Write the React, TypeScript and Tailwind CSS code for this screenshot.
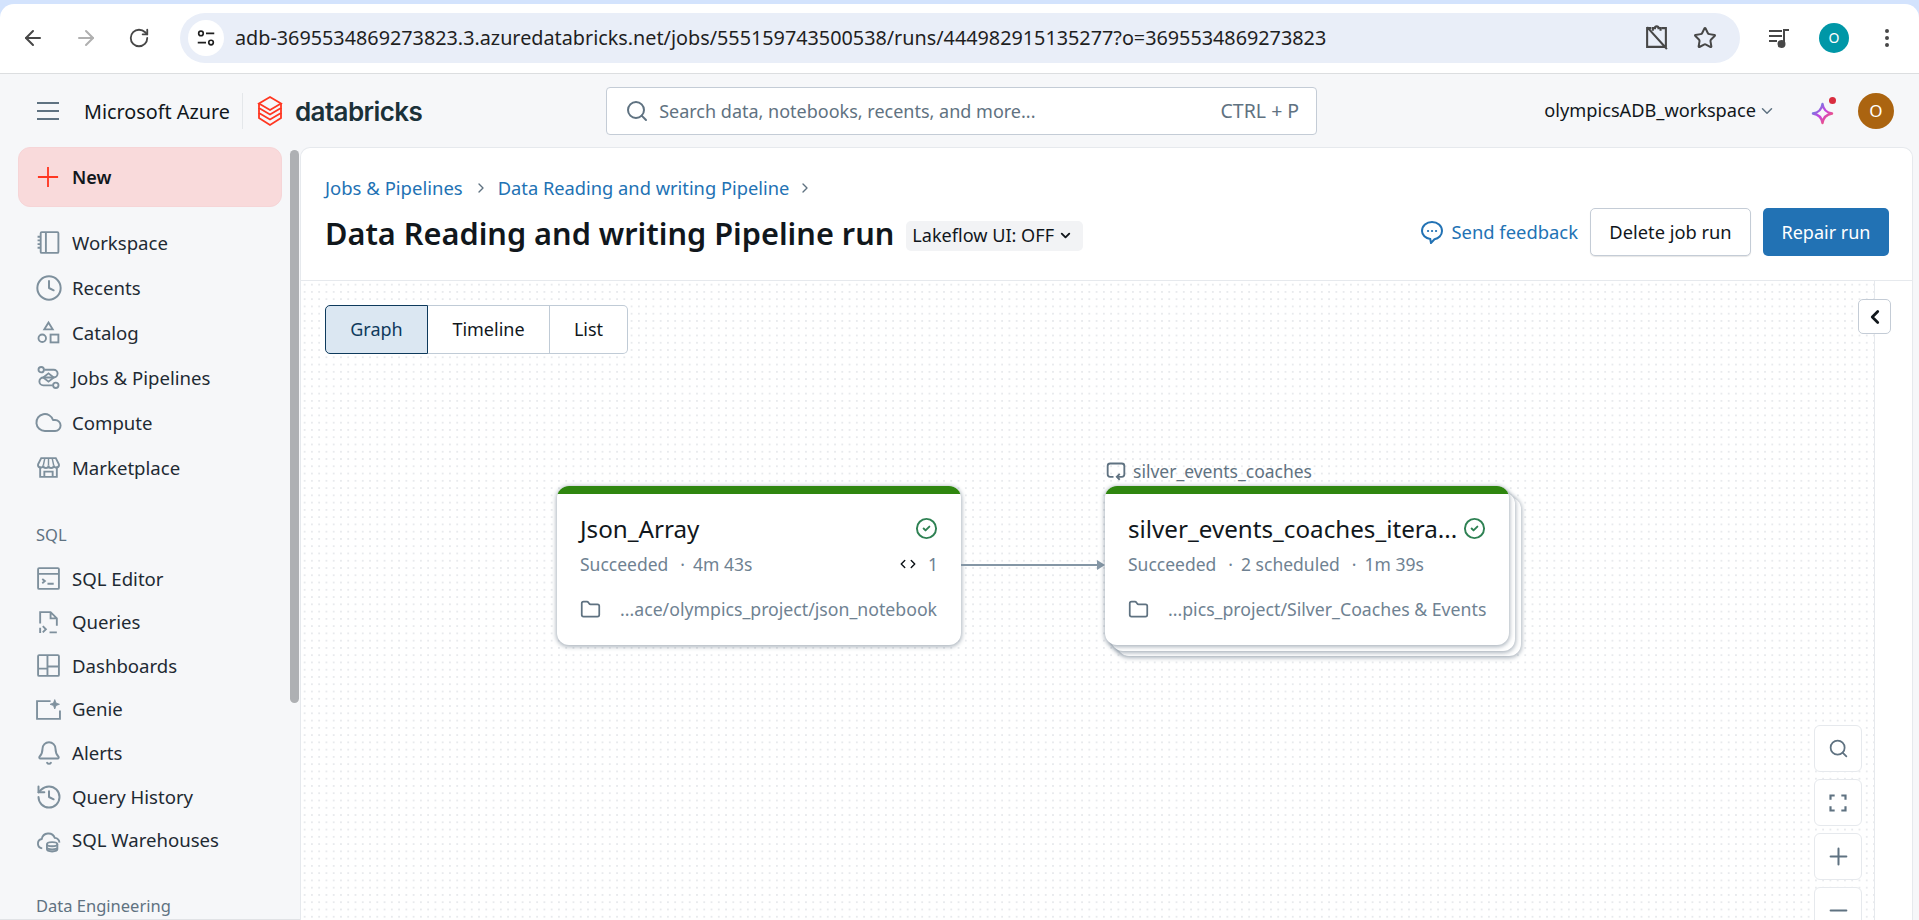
import * as React from "react";
import {
  ArrowLeft,
  ArrowRight,
  Bell,
  ChevronDown,
  ChevronLeft,
  ChevronRight,
  CircleCheck,
  Clock,
  Cloud,
  EllipsisVertical,
  Folder,
  History,
  Minus,
  Plus,
  RotateCw,
  Search,
  Star,
} from "lucide-react";

/* ─── Small drawn icons ─────────────────────────────── */
type IconProps = { className?: string };

const Outline = ({ className, children }: IconProps & { children: React.ReactNode }) => (
  <svg viewBox="0 0 24 24" fill="none" stroke="currentColor" strokeWidth={1.8} className={className}>
    {children}
  </svg>
);

const NotebookIcon = (p: IconProps) => (
  <Outline {...p}>
    <rect x="4.5" y="2" width="17" height="20" rx="1" />
    <path d="M9.5 2v20M1.5 6.5h3M1.5 10h3M1.5 13.5h3M1.5 17h3" />
  </Outline>
);
const CatalogIcon = (p: IconProps) => (
  <Outline {...p}>
    <path d="M12 2.5l4 6.5H8z" />
    <circle cx="6" cy="17.5" r="3.6" />
    <rect x="14" y="14" width="7.5" height="7.5" />
  </Outline>
);
const PipelineIcon = (p: IconProps) => (
  <Outline {...p}>
    <circle cx="5" cy="4.5" r="2.6" />
    <circle cx="19" cy="19.5" r="2.6" />
    <path d="M8 4.5h9a3.6 3.6 0 0 1 0 7.500H7a3.7 3.700 0 0 0 0 7.500h9" />
    <path d="M7 12l5-4 5 4-5 4z" />
  </Outline>
);
const StoreIcon = (p: IconProps) => (
  <Outline {...p}>
    <path d="M4 11v10h16V11M8 21v-5h8v5" />
    <path d="M5 3h14l3 6a2.500 2.500 0 0 1-5 1 2.500 2.500 0 0 1-5 0 2.500 2.500 0 0 1-5 0 2.500 2.500 0 0 1-5-1z" />
    <path d="M8.500 3L7 10M15.500 3L17 10M12 3v7" strokeWidth={1.4} />
  </Outline>
);
const EditorIcon = (p: IconProps) => (
  <Outline {...p}>
    <rect x="2" y="2" width="20" height="20" rx="1" />
    <path d="M2 7.500h20M6 12.500l2.500 2-2.500 2M11 17h6" />
  </Outline>
);
const QueriesIcon = (p: IconProps) => (
  <Outline {...p}>
    <path d="M4 13V2h10l6 6v7M14 2v6h6M4 22v-5" />
    <path d="M6.500 15.500l3 3-3 3M13 21.500h7" />
  </Outline>
);
const DashboardIcon = (p: IconProps) => (
  <Outline {...p}>
    <rect x="2" y="2" width="20" height="20" rx="1" />
    <path d="M11 2v20M11 13h11M2 15h9" />
  </Outline>
);
const GenieIcon = (p: IconProps) => (
  <Outline {...p}>
    <path d="M14 4H1v17h22v-8" />
    <path d="M18 2.500l1.200 3.300 3.300 1.200-3.300 1.200L18 11.500l-1.200-3.300L13.500 7l3.300-1.200z" fill="currentColor" strokeWidth={0.8} />
  </Outline>
);
const WarehouseIcon = (p: IconProps) => (
  <Outline {...p}>
    <path d="M6 19.500a4.500 4.500 0 0 1-.5-8.900 6.500 6.500 0 0 1 12.500-1.100 5 5 0 0 1 4.500 4.500" />
    <ellipse cx="15.500" cy="15.500" rx="5" ry="2" />
    <path d="M10.500 15.500v5c0 1.100 2.200 2 5 2s5-.9 5-2v-5M10.500 18.500c0 1.100 2.200 2 5 2s5-.9 5-2" />
  </Outline>
);
const ClockIcon = () => <Clock className="h-[28px] w-[28px] shrink-0" strokeWidth={1.7} />;
const CloudIcon = () => <Cloud className="h-[29px] w-[29px] shrink-0" strokeWidth={1.6} />;
const BellIcon = () => <Bell className="h-[26px] w-[26px] shrink-0" strokeWidth={1.8} />;
const HistoryIcon = () => <History className="h-[28px] w-[28px] shrink-0" strokeWidth={1.7} />;

const TuneIcon = (p: IconProps) => (
  <Outline {...p}>
    <circle cx="6.500" cy="7" r="2.500" />
    <path d="M12 7h9M3 17h9" />
    <circle cx="17.500" cy="17" r="2.500" />
  </Outline>
);
const ClipboardOffIcon = (p: IconProps) => (
  <svg viewBox="0 0 24 24" fill="none" stroke="currentColor" strokeWidth={2} className={p.className}>
    <path d="M7 3H3v18h18V7M17 3h4v4M8.500 5.500V3h2a1.700 1.700 0 0 1 3.400 0h2v2.500M3 2l19 21" />
  </svg>
);
const QueueMusicIcon = (p: IconProps) => (
  <svg viewBox="0 0 24 24" fill="none" stroke="currentColor" strokeWidth={2} className={p.className}>
    <path d="M2 5h13M2 10h13M2 15h8" />
    <path d="M17 17V4h5" />
    <circle cx="14.500" cy="18" r="3" fill="currentColor" />
  </svg>
);
const LoopIcon = (p: IconProps) => (
  <svg viewBox="0 0 24 24" fill="none" stroke="currentColor" strokeWidth={2.200} className={p.className}>
    <path d="M9 19H5a3 3 0 0 1-3-3V6a3 3 0 0 1 3-3h14a3 3 0 0 1 3 3v10a3 3 0 0 1-3 3h-6" />
    <path d="M16.500 15.500L13 19l3.500 3.500" />
  </svg>
);
const FeedbackIcon = (p: IconProps) => (
  <svg viewBox="0 0 24 24" fill="none" stroke="currentColor" strokeWidth={2} className={p.className}>
    <path d="M12 2c5.500 0 10 3.800 10 9 0 4.400-3.600 7.600-7.500 8.300L11 23l-.8-4C5.600 18.400 2 15.200 2 11c0-5.200 4.500-9 10-9z" />
    <path d="M8 11h.1M12 11h.1M16 11h.1" strokeLinecap="round" strokeWidth={2.200} />
  </svg>
);
const SparkleIcon = (p: IconProps) => (
  <svg viewBox="0 0 24 24" fill="none" strokeWidth={2.400} className={p.className}>
    <defs>
      <linearGradient id="spark" x1="0" y1="0" x2="1" y2="1">
        <stop offset="0" stopColor="#4299e0" />
        <stop offset="0.5" stopColor="#ca42e0" />
        <stop offset="1" stopColor="#ff5f46" />
      </linearGradient>
    </defs>
    <path
      d="M12 2c.8 5.800 3.500 9 10 10-6.500 1-9.200 4.200-10 10-.8-5.800-3.500-9-10-10 6.500-1 9.200-4.200 10-10z"
      stroke="url(#spark)"
      strokeLinejoin="round"
    />
  </svg>
);
const DatabricksLogo = (p: IconProps) => (
  <svg viewBox="0 0 26 32" fill="none" stroke="#ff3621" strokeWidth={1.800} className={p.className}>
    <path d="M13 2L24 8.500 13 15 2 8.500z" />
    <path d="M2 8.500V13l11 6.500L24 13V8.500" />
    <path d="M2 13v5l11 6.500L24 18v-5" />
    <path d="M2 18v5l11 7 11-7v-5" />
  </svg>
);

/* ─── Sidebar data ──────────────────────────────────── */
const mainNav = [
  { label: "Workspace", Icon: NotebookIcon },
  { label: "Recents", Icon: ClockIcon },
  { label: "Catalog", Icon: CatalogIcon },
  { label: "Jobs & Pipelines", Icon: PipelineIcon },
  { label: "Compute", Icon: CloudIcon },
  { label: "Marketplace", Icon: StoreIcon },
];

const sqlNav = [
  { label: "SQL Editor", Icon: EditorIcon },
  { label: "Queries", Icon: QueriesIcon },
  { label: "Dashboards", Icon: DashboardIcon },
  { label: "Genie", Icon: GenieIcon },
  { label: "Alerts", Icon: BellIcon },
  { label: "Query History", Icon: HistoryIcon },
  { label: "SQL Warehouses", Icon: WarehouseIcon },
];

/* ─── Browser bar ───────────────────────────────────── */
function BrowserBar() {
  return (
    <div className="shrink-0 bg-[#d3e3fd] pt-[4px]">
      <div className="flex h-[70px] items-center rounded-tl-[14px] rounded-tr-[14px] border-b border-[#dcdee0] bg-white pb-[2px]">
        <ArrowLeft className="ml-[21px] h-[24px] w-[24px] text-[#474747]" />
        <ArrowRight className="ml-[29px] h-[24px] w-[24px] text-[#b0b0b0]" />
        <RotateCw className="ml-[30px] h-[22px] w-[22px] text-[#474747]" />
        <div className="ml-[30px] flex h-[50px] w-[1560px] items-center rounded-full bg-[#e9eef8] pl-[8px] pr-[23px]">
          <div className="flex h-[36px] w-[36px] items-center justify-center rounded-full bg-white">
            <TuneIcon className="h-[22px] w-[22px] text-[#1f1f1f]" />
          </div>
          <span className="ml-[11px] flex-1 text-[19.800px] text-[#1f1f1f]">
            adb-3695534869273823.3.azuredatabricks.net/jobs/555159743500538/runs/444982915135277?o=3695534869273823
          </span>
          <ClipboardOffIcon className="mr-[24px] h-[25px] w-[25px] text-[#474747]" />
          <Star className="h-[24px] w-[24px] text-[#474747]" />
        </div>
        <QueueMusicIcon className="ml-[27px] h-[24px] w-[24px] text-[#474747]" />
        <div className="ml-[28px] flex h-[30px] w-[30px] items-center justify-center rounded-full bg-[#0097a7] text-[14px] text-white">
          O
        </div>
        <EllipsisVertical className="ml-[26px] h-[24px] w-[24px] text-[#474747]" />
      </div>
    </div>
  );
}

/* ─── App header ────────────────────────────────────── */
function AppHeader() {
  return (
    <header className="flex h-[73px] shrink-0 items-center pl-[36px] pr-[24px] pt-[1px]">
      <svg viewBox="0 0 24 24" className="h-[24px] w-[24px] text-[#5f7281]" fill="none" stroke="currentColor" strokeWidth={2}>
        <path d="M1 4h22M1 12h22M1 20h22" />
      </svg>
      <span className="ml-[24px] pt-[2px] text-[19.800px] text-[#11171c]">Microsoft Azure</span>
      <div className="ml-[12px] h-[36px] w-px bg-[#e4e7ea]" />
      <DatabricksLogo className="ml-[14px] h-[32px] w-[26px]" />
      <span className="ml-[12px] font-['Inter',sans-serif] text-[26px] font-semibold tracking-[-0.6px] text-[#1b3139]">
        databricks
      </span>
      <div className="ml-[184px] flex h-[48px] w-[711px] items-center rounded-[4px] border border-[#c4ccd6] bg-white pl-[18px] pr-[17px] text-[#5f7281]">
        <Search className="h-[24px] w-[24px]" />
        <span className="ml-[10px] flex-1 text-[18px]">Search data, notebooks, recents, and more...</span>
        <span className="text-[19.500px]">CTRL + P</span>
      </div>
      <div className="ml-auto flex items-center">
        <span className="text-[18.200px] text-[#11171c]">olympicsADB_workspace</span>
        <ChevronDown className="ml-[2px] h-[18px] w-[18px] text-[#5f7281]" />
        <div className="relative ml-[35px] h-[24px] w-[24px]">
          <SparkleIcon className="absolute top-[3px] h-[23px] w-[23px]" />
          <span className="absolute -top-[2px] left-[18px] h-[7px] w-[7px] rounded-full bg-[#d92d3f]" />
        </div>
        <div className="ml-[23px] mr-[1px] flex h-[36px] w-[36px] items-center justify-center rounded-full bg-[#ab6410] text-[17px] text-white">
          O
        </div>
      </div>
    </header>
  );
}

/* ─── Sidebar ───────────────────────────────────────── */
function NavRow({ label, Icon, height }: { label: string; Icon: React.ComponentType<IconProps>; height: string }) {
  return (
    <li className={`flex items-center ${height}`}>
      <span className="ml-[18px] flex h-[25px] w-[25px] items-center justify-center text-[#7e909d]">
        <Icon className="h-[25px] w-[25px] shrink-0" />
      </span>
      <span className="ml-[11px] text-[18.600px] text-[#1e2a33]">{label}</span>
    </li>
  );
}

function Sidebar() {
  return (
    <aside className="flex w-[300px] shrink-0 overflow-hidden border-b border-[#e1e3e6]">
      <nav className="w-[290px] shrink-0 pl-[18px] pr-[8px]">
        <div className="flex h-[60px] items-center rounded-[12px] border border-[#f6d5d7] bg-[#f9dadb] pl-[18px]">
          <svg viewBox="0 0 24 24" className="h-[22px] w-[22px]" fill="none" stroke="#ff3621" strokeWidth={2}>
            <path d="M12 1v22M1 12h22" />
          </svg>
          <span className="ml-[13px] text-[18px] font-semibold text-[#11171c]">New</span>
        </div>
        <ul className="mt-[13px] flex flex-col">
          {mainNav.map((item) => (
            <NavRow key={item.label} {...item} height="h-[45px]" />
          ))}
        </ul>
        <div className="mt-[33px] pl-[18px] text-[16.500px] text-[#5f7281]">SQL</div>
        <ul className="mt-[9px] flex flex-col">
          {sqlNav.map((item) => (
            <NavRow key={item.label} {...item} height="h-[43.600px]" />
          ))}
        </ul>
        <div className="mt-[32px] pl-[18px] text-[16.500px] text-[#5f7281]">Data Engineering</div>
      </nav>
      <div className="mt-[3px] h-[553px] w-[9px] shrink-0 rounded-full bg-[#aeb0b3]" />
    </aside>
  );
}

/* ─── Canvas pieces ─────────────────────────────────── */
function TaskCard({
  title,
  meta,
  path,
  trailing,
}: {
  title: string;
  meta: string[];
  path: string;
  trailing?: React.ReactNode;
}) {
  return (
    <div className="flex h-[159px] w-[404px] flex-col overflow-hidden rounded-[12px] bg-white shadow-[0_1px_4px_1px_rgba(70,90,110,0.45)]">
      <div className="h-[8px] shrink-0 bg-[#2f860f]" />
      <div className="flex flex-col px-[23px] pt-[12px]">
        <div className="flex h-[45px] items-center justify-between">
          <span className="pt-[2px] text-[24.200px] text-[#11171c]">{title}</span>
          <CircleCheck className="h-[23px] w-[23px] shrink-0 text-[#2e8153]" strokeWidth={2} />
        </div>
        <div className="mt-[2px] flex h-[22px] items-center justify-between text-[17.500px] text-[#6f8292]">
          <span className="flex whitespace-nowrap">
            {meta.map((part, i) => (
              <React.Fragment key={part}>
                {i > 0 && <span className="ml-[12px] mr-[8px]">·</span>}
                {part}
              </React.Fragment>
            ))}
          </span>
          {trailing}
        </div>
        <div className="mt-[23px] flex h-[22px] items-center text-[17.700px] text-[#6f8292]">
          <Folder className="h-[21px] w-[21px] shrink-0 text-[#5f7281]" />
          <span className="ml-[19px] whitespace-nowrap">{path}</span>
        </div>
      </div>
    </div>
  );
}

function ZoomButton({ children }: { children: React.ReactNode }) {
  return (
    <div className="flex h-[47px] w-[48px] items-center justify-center rounded-[6px] border border-[#e6e9ed] bg-white text-[#5f7281]">
      {children}
    </div>
  );
}

function Canvas() {
  return (
    <div className="relative min-h-0 flex-1 overflow-hidden border-r border-[#e6e9ed] bg-[radial-gradient(#e8eaed_1px,transparent_1.2px)] bg-[length:7.270px_7.270px]">
      {/* View switch */}
      <div className="ml-[24px] mt-[24px] flex h-[49px] w-[303px] bg-white text-[18px] text-[#11171c]">
        <div className="flex w-[103px] items-center justify-center rounded-l-[5px] border border-[#0e3a5c] bg-[#dbe7f2] text-[#0e3a5c]">
          Graph
        </div>
        <div className="flex w-[122px] items-center justify-center border-y border-r border-[#c0cbd6]">Timeline</div>
        <div className="flex flex-1 items-center justify-center rounded-r-[5px] border-y border-r border-[#c0cbd6]">List</div>
      </div>

      {/* Graph nodes sit on the free canvas */}
      <div className="absolute left-[256px] top-[205px]">
        <TaskCard
          title="Json_Array"
          meta={["Succeeded", "4m 43s"]}
          path="...ace/olympics_project/json_notebook"
          trailing={
            <span className="flex items-center">
              <ChevronLeft className="-mr-[4px] h-[14px] w-[14px] text-[#11171c]" strokeWidth={2.500} />
              <ChevronRight className="h-[14px] w-[14px] text-[#11171c]" strokeWidth={2.500} />
              <span className="ml-[8px]">1</span>
            </span>
          }
        />
      </div>
      <div className="absolute left-[660px] top-[283px] h-[2px] w-[140px] bg-[#8496a5]" />
      <div className="absolute left-[796px] top-[279px] h-0 w-0 border-y-[5px] border-l-[8px] border-y-transparent border-l-[#8496a5]" />

      <div className="absolute left-[805px] top-[177px] flex items-center text-[17.500px] text-[#5f7281]">
        <LoopIcon className="h-[20px] w-[20px]" />
        <span className="ml-[7px]">silver_events_coaches</span>
      </div>
      <div className="absolute left-[816px] top-[216px] h-[159px] w-[404px] rounded-[12px] bg-white shadow-[0_1px_4px_1px_rgba(70,90,110,0.45)]" />
      <div className="absolute left-[810px] top-[211px] h-[159px] w-[404px] rounded-[12px] bg-white shadow-[0_1px_4px_1px_rgba(70,90,110,0.45)]" />
      <div className="absolute left-[804px] top-[205px]">
        <TaskCard
          title="silver_events_coaches_itera..."
          meta={["Succeeded", "2 scheduled", "1m 39s"]}
          path="...pics_project/Silver_Coaches & Events"
        />
      </div>

      {/* Zoom controls */}
      <div className="absolute right-[12px] top-[444px] flex flex-col gap-[7px]">
        <ZoomButton>
          <Search className="h-[21px] w-[21px]" />
        </ZoomButton>
        <ZoomButton>
          <svg viewBox="0 0 24 24" className="h-[20px] w-[20px]" fill="none" stroke="currentColor" strokeWidth={2.600}>
            <path d="M3 8V3h5M16 3h5v5M21 16v5h-5M8 21H3v-5" />
          </svg>
        </ZoomButton>
        <ZoomButton>
          <Plus className="h-[27px] w-[27px]" strokeWidth={1.800} />
        </ZoomButton>
        <ZoomButton>
          <Minus className="h-[27px] w-[27px]" strokeWidth={1.800} />
        </ZoomButton>
      </div>
    </div>
  );
}

/* ─── Main panel ────────────────────────────────────── */
function MainPanel() {
  return (
    <main className="mr-[6px] flex min-w-0 flex-1 flex-col rounded-tl-[10px] rounded-tr-[10px] border border-b-0 border-[#e6e9ed] bg-white">
      <div className="flex h-[133px] shrink-0 border-b border-[#e6e9ed] pl-[24px] pr-[23px]">
        <div className="flex-1">
          <div className="mt-[25px] flex h-[30px] items-center text-[18.500px] text-[#2272b4]">
            <span>Jobs &amp; Pipelines</span>
            <ChevronRight className="ml-[10px] h-[16px] w-[16px] text-[#5f7281]" />
            <span className="ml-[9px] text-[18.300px]">Data Reading and writing Pipeline</span>
            <ChevronRight className="ml-[8px] h-[16px] w-[16px] text-[#5f7281]" />
          </div>
          <div className="mt-[10px] flex items-center">
            <h1 className="text-[30.700px] leading-[40px] font-semibold text-[#11171c]">
              Data Reading and writing Pipeline run
            </h1>
            <div className="ml-[12px] mt-[5px] flex h-[30px] items-center rounded-[5px] bg-[#f2f3f5] pl-[6px] pr-[10px] text-[18.100px] text-[#11171c]">
              Lakeflow UI: OFF
              <ChevronDown className="ml-[4px] h-[15px] w-[15px]" strokeWidth={3} />
            </div>
          </div>
        </div>
        <div className="mt-[60px] flex h-[48px] items-center">
          <FeedbackIcon className="h-[24px] w-[24px] text-[#2272b4]" />
          <span className="ml-[7px] text-[18.400px] text-[#2272b4]">Send feedback</span>
          <button className="ml-[12px] h-[48px] w-[161px] rounded-[5px] border border-[#c4ccd6] bg-white text-[18.300px] text-[#11171c] shadow-[0_1px_1px_rgba(0,0,0,0.1)]">
            Delete job run
          </button>
          <button className="ml-[12px] h-[48px] w-[126px] rounded-[5px] bg-[#2272b4] text-[18px] text-white">
            Repair run
          </button>
        </div>
      </div>
      <div className="relative flex min-h-0 flex-1">
        <Canvas />
        <div className="w-[37px] shrink-0" />
        {/* Collapse details */}
        <div className="absolute right-[21px] top-[18px] flex h-[35px] w-[33px] items-center justify-center rounded-[5px] border border-[#c4ccd6] bg-white">
          <ChevronLeft className="h-[22px] w-[22px] text-[#11171c]" strokeWidth={3} />
        </div>
      </div>
    </main>
  );
}

export default function App() {
  return (
    <div className="flex h-screen w-full flex-col overflow-hidden bg-[#f6f7f9] font-['Noto_Sans',sans-serif]">
      <BrowserBar />
      <AppHeader />
      <div className="flex min-h-0 flex-1">
        <Sidebar />
        <MainPanel />
      </div>
    </div>
  );
}
